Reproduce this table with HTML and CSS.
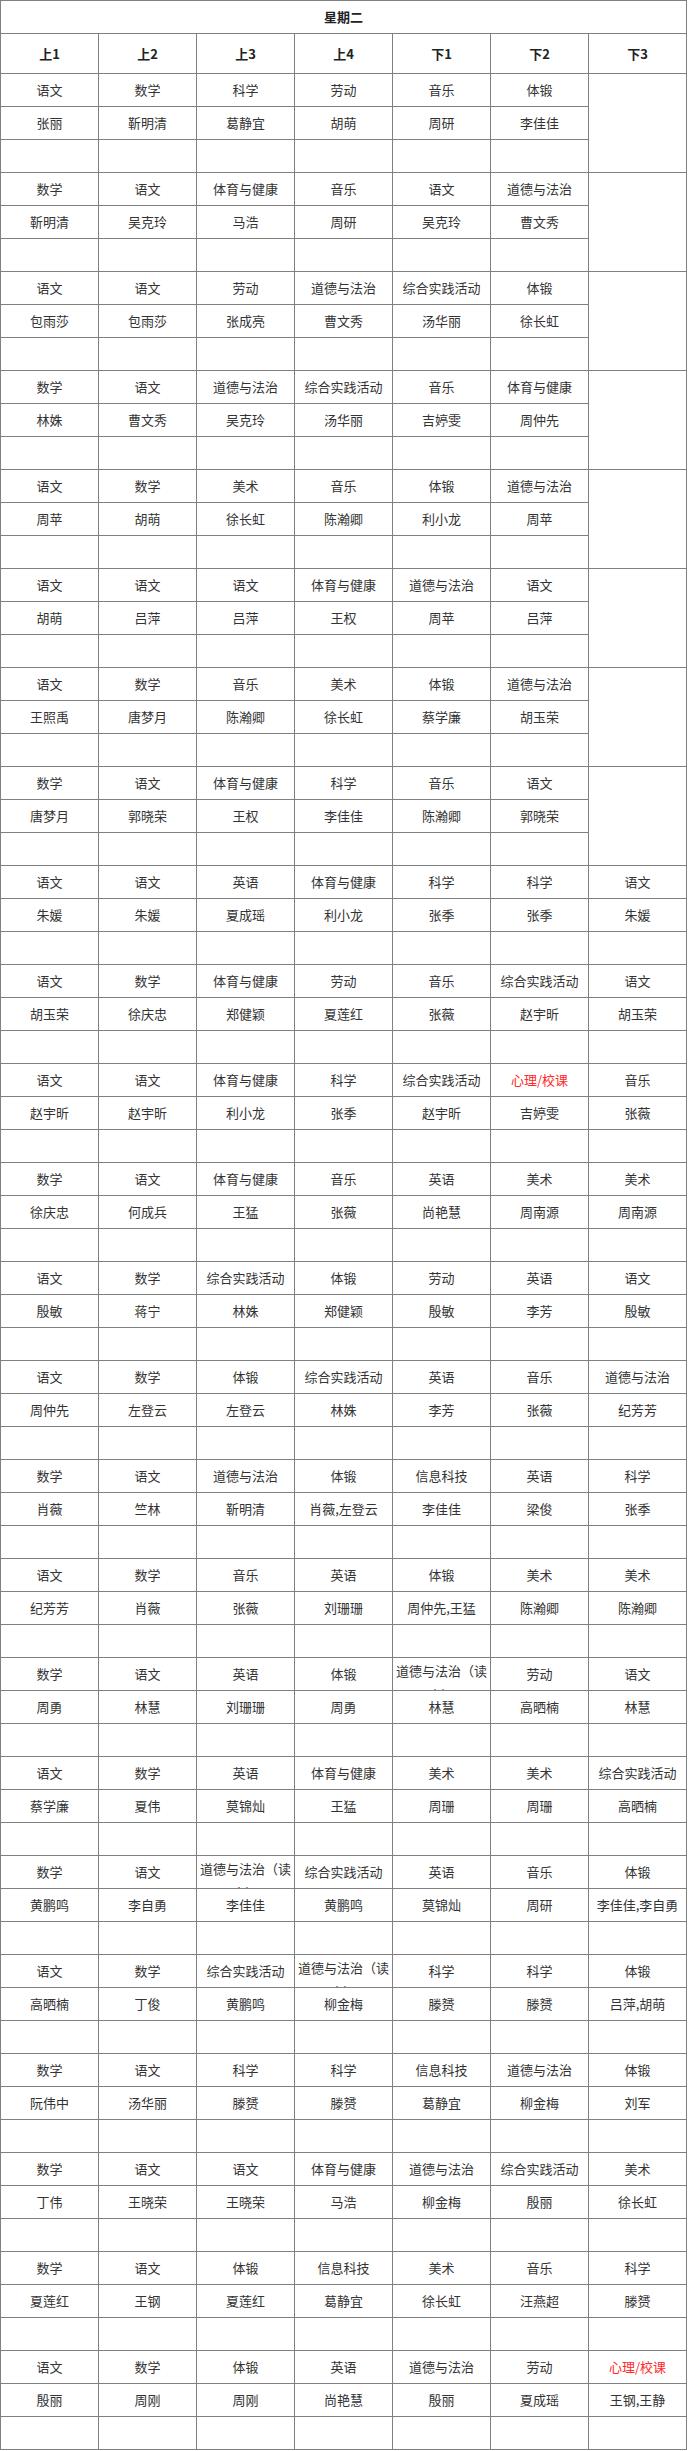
FILE: index.html
```html
<!DOCTYPE html>
<html lang="zh-CN">
<head>
<meta charset="utf-8">
<title>星期二</title>
<link rel="stylesheet" href="styles.css">
</head>
<body>
<table class="schedule">
<colgroup><col><col><col><col><col><col><col></colgroup>
<thead>
<tr class="title-row"><th colspan="7">星期二</th></tr>
<tr class="head-row"><th>上1</th><th>上2</th><th>上3</th><th>上4</th><th>下1</th><th>下2</th><th>下3</th></tr>
</thead>
<tbody>
<tr><td>语文</td><td>数学</td><td>科学</td><td>劳动</td><td>音乐</td><td>体锻</td><td rowspan="3"></td></tr>
<tr><td>张丽</td><td>靳明清</td><td>葛静宜</td><td>胡萌</td><td>周研</td><td>李佳佳</td></tr>
<tr><td></td><td></td><td></td><td></td><td></td><td></td></tr>

<tr><td>数学</td><td>语文</td><td>体育与健康</td><td>音乐</td><td>语文</td><td>道德与法治</td><td rowspan="3"></td></tr>
<tr><td>靳明清</td><td>吴克玲</td><td>马浩</td><td>周研</td><td>吴克玲</td><td>曹文秀</td></tr>
<tr><td></td><td></td><td></td><td></td><td></td><td></td></tr>

<tr><td>语文</td><td>语文</td><td>劳动</td><td>道德与法治</td><td>综合实践活动</td><td>体锻</td><td rowspan="3"></td></tr>
<tr><td>包雨莎</td><td>包雨莎</td><td>张成亮</td><td>曹文秀</td><td>汤华丽</td><td>徐长虹</td></tr>
<tr><td></td><td></td><td></td><td></td><td></td><td></td></tr>

<tr><td>数学</td><td>语文</td><td>道德与法治</td><td>综合实践活动</td><td>音乐</td><td>体育与健康</td><td rowspan="3"></td></tr>
<tr><td>林姝</td><td>曹文秀</td><td>吴克玲</td><td>汤华丽</td><td>吉婷雯</td><td>周仲先</td></tr>
<tr><td></td><td></td><td></td><td></td><td></td><td></td></tr>

<tr><td>语文</td><td>数学</td><td>美术</td><td>音乐</td><td>体锻</td><td>道德与法治</td><td rowspan="3"></td></tr>
<tr><td>周苹</td><td>胡萌</td><td>徐长虹</td><td>陈瀚卿</td><td>利小龙</td><td>周苹</td></tr>
<tr><td></td><td></td><td></td><td></td><td></td><td></td></tr>

<tr><td>语文</td><td>语文</td><td>语文</td><td>体育与健康</td><td>道德与法治</td><td>语文</td><td rowspan="3"></td></tr>
<tr><td>胡萌</td><td>吕萍</td><td>吕萍</td><td>王权</td><td>周苹</td><td>吕萍</td></tr>
<tr><td></td><td></td><td></td><td></td><td></td><td></td></tr>

<tr><td>语文</td><td>数学</td><td>音乐</td><td>美术</td><td>体锻</td><td>道德与法治</td><td rowspan="3"></td></tr>
<tr><td>王照禹</td><td>唐梦月</td><td>陈瀚卿</td><td>徐长虹</td><td>蔡学廉</td><td>胡玉荣</td></tr>
<tr><td></td><td></td><td></td><td></td><td></td><td></td></tr>

<tr><td>数学</td><td>语文</td><td>体育与健康</td><td>科学</td><td>音乐</td><td>语文</td><td rowspan="3"></td></tr>
<tr><td>唐梦月</td><td>郭晓荣</td><td>王权</td><td>李佳佳</td><td>陈瀚卿</td><td>郭晓荣</td></tr>
<tr><td></td><td></td><td></td><td></td><td></td><td></td></tr>

<tr><td>语文</td><td>语文</td><td>英语</td><td>体育与健康</td><td>科学</td><td>科学</td><td>语文</td></tr>
<tr><td>朱媛</td><td>朱媛</td><td>夏成瑶</td><td>利小龙</td><td>张季</td><td>张季</td><td>朱媛</td></tr>
<tr><td></td><td></td><td></td><td></td><td></td><td></td><td></td></tr>

<tr><td>语文</td><td>数学</td><td>体育与健康</td><td>劳动</td><td>音乐</td><td>综合实践活动</td><td>语文</td></tr>
<tr><td>胡玉荣</td><td>徐庆忠</td><td>郑健颖</td><td>夏莲红</td><td>张薇</td><td>赵宇昕</td><td>胡玉荣</td></tr>
<tr><td></td><td></td><td></td><td></td><td></td><td></td><td></td></tr>

<tr><td>语文</td><td>语文</td><td>体育与健康</td><td>科学</td><td>综合实践活动</td><td class="red">心理/校课</td><td>音乐</td></tr>
<tr><td>赵宇昕</td><td>赵宇昕</td><td>利小龙</td><td>张季</td><td>赵宇昕</td><td>吉婷雯</td><td>张薇</td></tr>
<tr><td></td><td></td><td></td><td></td><td></td><td></td><td></td></tr>

<tr><td>数学</td><td>语文</td><td>体育与健康</td><td>音乐</td><td>英语</td><td>美术</td><td>美术</td></tr>
<tr><td>徐庆忠</td><td>何成兵</td><td>王猛</td><td>张薇</td><td>尚艳慧</td><td>周南源</td><td>周南源</td></tr>
<tr><td></td><td></td><td></td><td></td><td></td><td></td><td></td></tr>

<tr><td>语文</td><td>数学</td><td>综合实践活动</td><td>体锻</td><td>劳动</td><td>英语</td><td>语文</td></tr>
<tr><td>殷敏</td><td>蒋宁</td><td>林姝</td><td>郑健颖</td><td>殷敏</td><td>李芳</td><td>殷敏</td></tr>
<tr><td></td><td></td><td></td><td></td><td></td><td></td><td></td></tr>

<tr><td>语文</td><td>数学</td><td>体锻</td><td>综合实践活动</td><td>英语</td><td>音乐</td><td>道德与法治</td></tr>
<tr><td>周仲先</td><td>左登云</td><td>左登云</td><td>林姝</td><td>李芳</td><td>张薇</td><td>纪芳芳</td></tr>
<tr><td></td><td></td><td></td><td></td><td></td><td></td><td></td></tr>

<tr><td>数学</td><td>语文</td><td>道德与法治</td><td>体锻</td><td>信息科技</td><td>英语</td><td>科学</td></tr>
<tr><td>肖薇</td><td>竺林</td><td>靳明清</td><td>肖薇,左登云</td><td>李佳佳</td><td>梁俊</td><td>张季</td></tr>
<tr><td></td><td></td><td></td><td></td><td></td><td></td><td></td></tr>

<tr><td>语文</td><td>数学</td><td>音乐</td><td>英语</td><td>体锻</td><td>美术</td><td>美术</td></tr>
<tr><td>纪芳芳</td><td>肖薇</td><td>张薇</td><td>刘珊珊</td><td>周仲先,王猛</td><td>陈瀚卿</td><td>陈瀚卿</td></tr>
<tr><td></td><td></td><td></td><td></td><td></td><td></td><td></td></tr>

<tr><td>数学</td><td>语文</td><td>英语</td><td>体锻</td><td><div class="clip">道德与法治（读本）</div></td><td>劳动</td><td>语文</td></tr>
<tr><td>周勇</td><td>林慧</td><td>刘珊珊</td><td>周勇</td><td>林慧</td><td>高晒楠</td><td>林慧</td></tr>
<tr><td></td><td></td><td></td><td></td><td></td><td></td><td></td></tr>

<tr><td>语文</td><td>数学</td><td>英语</td><td>体育与健康</td><td>美术</td><td>美术</td><td>综合实践活动</td></tr>
<tr><td>蔡学廉</td><td>夏伟</td><td>莫锦灿</td><td>王猛</td><td>周珊</td><td>周珊</td><td>高晒楠</td></tr>
<tr><td></td><td></td><td></td><td></td><td></td><td></td><td></td></tr>

<tr><td>数学</td><td>语文</td><td><div class="clip">道德与法治（读本）</div></td><td>综合实践活动</td><td>英语</td><td>音乐</td><td>体锻</td></tr>
<tr><td>黄鹏鸣</td><td>李自勇</td><td>李佳佳</td><td>黄鹏鸣</td><td>莫锦灿</td><td>周研</td><td>李佳佳,李自勇</td></tr>
<tr><td></td><td></td><td></td><td></td><td></td><td></td><td></td></tr>

<tr><td>语文</td><td>数学</td><td>综合实践活动</td><td><div class="clip">道德与法治（读本）</div></td><td>科学</td><td>科学</td><td>体锻</td></tr>
<tr><td>高晒楠</td><td>丁俊</td><td>黄鹏鸣</td><td>柳金梅</td><td>滕赟</td><td>滕赟</td><td>吕萍,胡萌</td></tr>
<tr><td></td><td></td><td></td><td></td><td></td><td></td><td></td></tr>

<tr><td>数学</td><td>语文</td><td>科学</td><td>科学</td><td>信息科技</td><td>道德与法治</td><td>体锻</td></tr>
<tr><td>阮伟中</td><td>汤华丽</td><td>滕赟</td><td>滕赟</td><td>葛静宜</td><td>柳金梅</td><td>刘军</td></tr>
<tr><td></td><td></td><td></td><td></td><td></td><td></td><td></td></tr>

<tr><td>数学</td><td>语文</td><td>语文</td><td>体育与健康</td><td>道德与法治</td><td>综合实践活动</td><td>美术</td></tr>
<tr><td>丁伟</td><td>王晓荣</td><td>王晓荣</td><td>马浩</td><td>柳金梅</td><td>殷丽</td><td>徐长虹</td></tr>
<tr><td></td><td></td><td></td><td></td><td></td><td></td><td></td></tr>

<tr><td>数学</td><td>语文</td><td>体锻</td><td>信息科技</td><td>美术</td><td>音乐</td><td>科学</td></tr>
<tr><td>夏莲红</td><td>王钢</td><td>夏莲红</td><td>葛静宜</td><td>徐长虹</td><td>汪燕超</td><td>滕赟</td></tr>
<tr><td></td><td></td><td></td><td></td><td></td><td></td><td></td></tr>

<tr><td>语文</td><td>数学</td><td>体锻</td><td>英语</td><td>道德与法治</td><td>劳动</td><td class="red">心理/校课</td></tr>
<tr><td>殷丽</td><td>周刚</td><td>周刚</td><td>尚艳慧</td><td>殷丽</td><td>夏成瑶</td><td>王钢,王静</td></tr>
<tr><td></td><td></td><td></td><td></td><td></td><td></td><td></td></tr>
</tbody>
</table>
</body>
</html>
```

FILE: styles.css
```css
html, body {
  margin: 0;
  padding: 0;
  background: #ffffff;
}

body {
  font-family: "Noto Sans CJK SC", "Noto Sans", "Liberation Sans", sans-serif;
  font-size: 13px;
  color: #333333;
}

.schedule {
  border-collapse: collapse;
  table-layout: fixed;
  width: 687px;
}

.schedule col {
  width: 98px;
}

.schedule th,
.schedule td {
  border: 1px solid #808080;
  padding: 0 2px;
  text-align: center;
  vertical-align: middle;
  line-height: 24px;
}

.schedule th {
  font-weight: bold;
  color: #222222;
}

.title-row th {
  height: 32px;
}

.head-row th {
  height: 39px;
}

.schedule td {
  height: 32px;
}

.schedule .red {
  color: #ff2a2a;
}

.clip {
  max-height: 31px;
  overflow: hidden;
  word-break: break-all;
}
```
